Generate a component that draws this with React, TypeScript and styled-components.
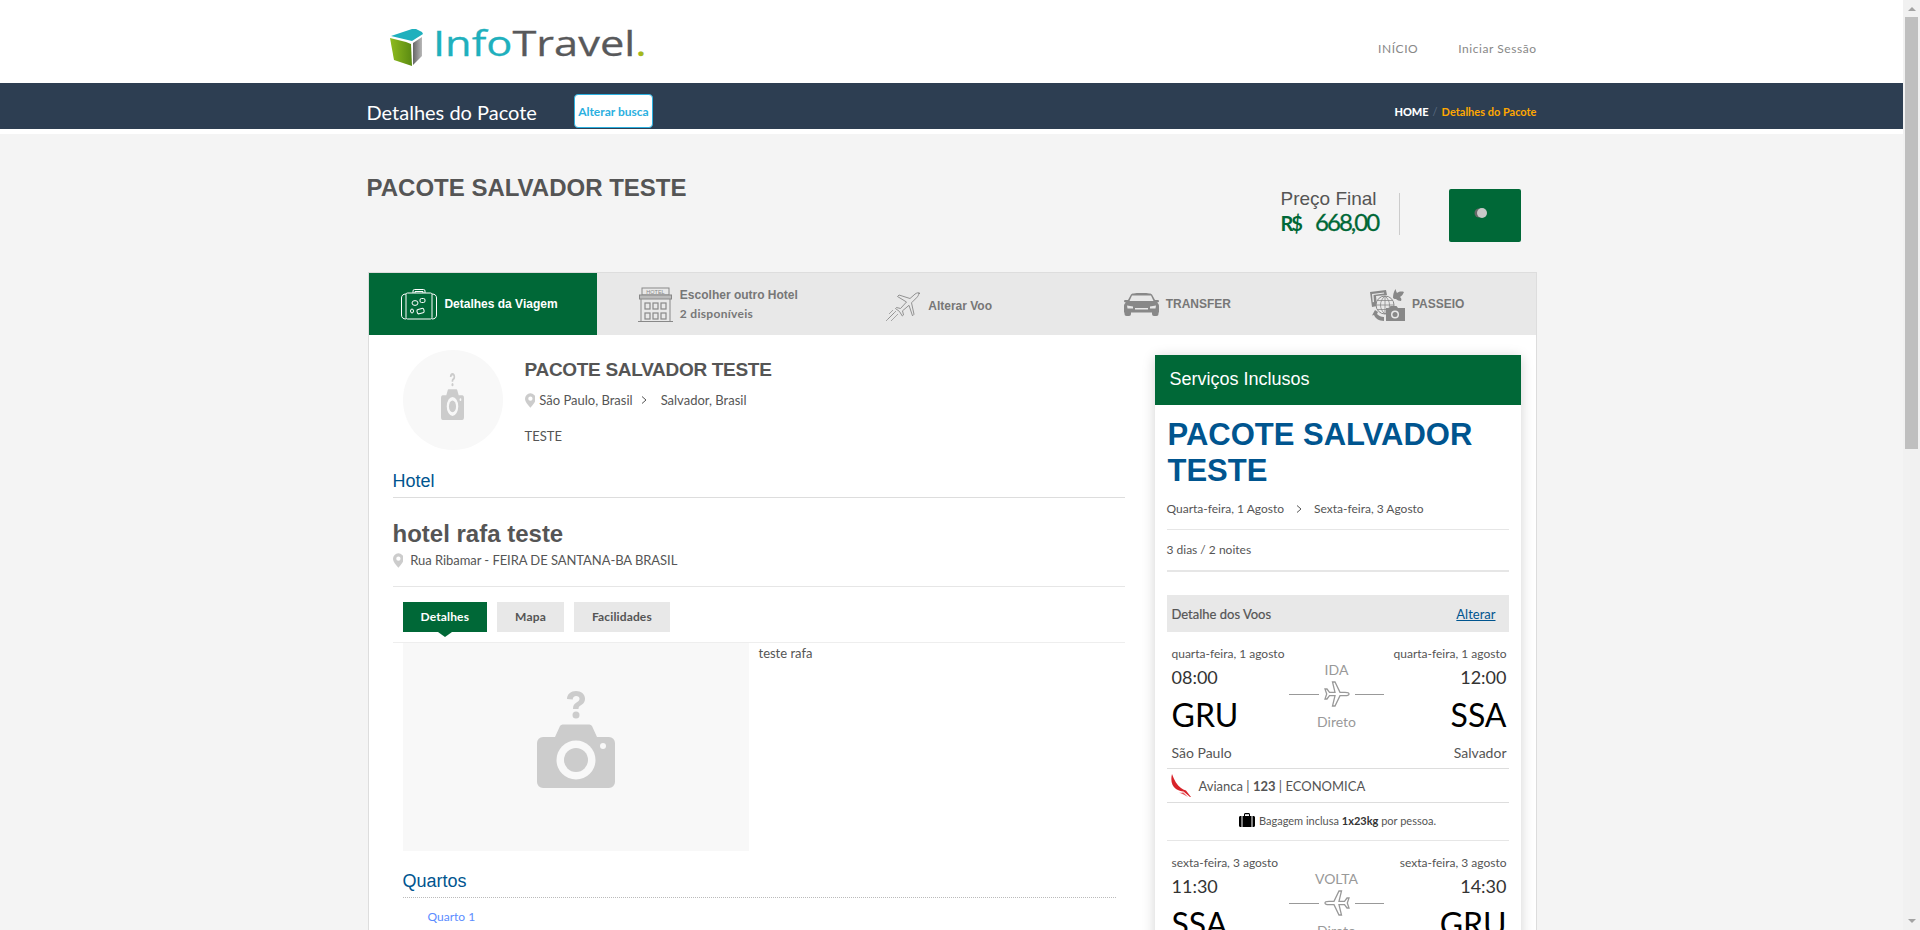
import styled, { createGlobalStyle } from "styled-components";

const GREEN = "#006837";
const BLUE = "#00558f";

const Global = createGlobalStyle`
  body { margin: 0; padding-right: 17px; background: #f4f4f4; font-family: Lato, "Liberation Sans", sans-serif; color: #555; }
`;

/* icons */
const Cube = () => (
  <svg width="33" height="37" viewBox="0 0 33 37">
    <defs>
      <linearGradient id="cg" x1="0" x2="1" y1="0" y2="0">
        <stop offset="0" stopColor="#8fbc1e" />
        <stop offset="1" stopColor="#5a8a12" />
      </linearGradient>
      <linearGradient id="cr" x1="0" x2="1" y1="0" y2="0">
        <stop offset="0" stopColor="#666" />
        <stop offset="1" stopColor="#b8b8b8" />
      </linearGradient>
    </defs>
    <path d="M0 9 L16 13 L21 15 L22 37 L4 31 Z" fill="url(#cg)" />
    <path d="M23 14 L32 8 L32 27 L23 36 Z" fill="url(#cr)" />
    <path d="M1 7 L22 0 L26 0 L32 3 L33 5 L22 12 Z" fill="#1fb0bd" />
  </svg>
);

const Pin = ({ size = 15 }: { size?: number }) => (
  <svg width={size * 0.72} height={size} viewBox="0 0 12 16">
    <path
      d="M6 0a6 6 0 0 0-6 6c0 4 6 10 6 10s6-6 6-10a6 6 0 0 0-6-6zm0 8.400A2.400 2.400 0 1 1 6 3.600a2.400 2.400 0 0 1 0 4.800z"
      fill="#ccc"
    />
  </svg>
);

const Chevron = () => (
  <svg width="6" height="8" viewBox="0 0 6 8">
    <path d="M1 .5 L5 4 L1 7.500" fill="none" stroke="#555" strokeWidth="1" />
  </svg>
);

const Suitcase = () => (
  <svg width="36" height="31" viewBox="0 0 36 31" fill="none" stroke="#fff" strokeWidth="1">
    <path d="M12 4V2a1.500 1.500 0 0 1 1.500-1.500h9A1.500 1.500 0 0 1 24 2v2M14 4V2.500h8V4" />
    <rect x="5" y="4" width="26" height="26" rx="1.500" />
    <path d="M5 5C2 5 .5 6.500.5 9v17c0 2.500 1.500 4 4.500 4M31 5c3 0 4.500 1.500 4.500 4v17c0 2.500-1.500 4-4.500 4" />
    <ellipse cx="14" cy="14" rx="3" ry="2.400" />
    <rect x="19" y="9.500" width="5" height="4" rx="1.500" />
    <rect x="16" y="20" width="7" height="4.500" rx="1.500" transform="rotate(-15 19 22)" />
    <ellipse cx="11" cy="22" rx="1.500" ry="2" />
  </svg>
);

const HotelIcon = () => (
  <svg width="35" height="35" viewBox="0 0 35 35" fill="none" stroke="#888" strokeWidth="1">
    <rect x="4" y="1" width="27" height="7" />
    <text x="17.500" y="6.600" textAnchor="middle" fontSize="5.500" fill="#888" stroke="none" fontFamily="'Liberation Sans', sans-serif">
      HOTEL
    </text>
    <rect x="1.500" y="8" width="32" height="4" fill="#bbb" />
    <path d="M3 12v22M32 12v22M0 34.500h35" />
    {[7, 15, 23].map((x) => (
      <g key={x}>
        <rect x={x} y="16" width="5" height="6" strokeWidth="1.200" />
        <rect x={x} y="26" width="5" height="6" strokeWidth="1.200" />
      </g>
    ))}
  </svg>
);

const PlaneTilt = () => (
  <svg width="36" height="30" viewBox="0 0 36 30" fill="none" stroke="#888" strokeWidth="0.9">
    <path d="M35 1.500c-1-1.400-3.500-.6-5 .6l-5 4.400-11-3.500-1.500 1.500 9 5.500-6 6.500-4-1-1 1 4 3 2.800 4.500 1.200-1-1-4.200 6.500-5.500 3.500 10.500 1.500-1.500-2.500-11.500 5-5c1.300-1.300 2.600-3 2-4.300z" />
    <path d="M11 19 3 27M9 21 1 29M13 22 6 29M8 18 4 22" strokeWidth="0.7" />
  </svg>
);

const Car = () => (
  <svg width="35" height="23" viewBox="0 0 35 23">
    <path
      fill="#888"
      d="M7 1.500C8 .5 10 0 17.500 0S27 .5 28 1.500L31 7h2.500c1 0 1.500.6 1.500 1.200S34.300 9.500 33 9.500c1.300 1 2 2 2 3.500v6.500h-.5V21a2 2 0 0 1-2 2h-2.500a2 2 0 0 1-2-2v-1.500H7V21a2 2 0 0 1-2 2H2.500a2 2 0 0 1-2-2v-1.500H0V13c0-1.500.7-2.500 2-3.500C.7 9.500 0 8.800 0 8.200S.5 7 1.500 7H4z"
    />
    <path fill="#e8e8e8" d="M8 2.500h19L29.500 8h-24zM3 12.500l6 1v2H3.500zM32 12.500l-6 1v2h5.500zM11 15h13v1.500H11z" />
  </svg>
);

const Tour = () => (
  <svg width="35" height="33" viewBox="0 0 35 33" fill="none">
    <path fill="#888" d="M0 4l16-2 1 5-11 1 1 10-5 1z" />
    <path fill="#e8e8e8" d="M2 6l12-1.500.2 1L3.500 7 4 14l-1.300.2z" />
    <circle cx="15" cy="17" r="9" fill="#e8e8e8" stroke="#888" strokeWidth="1" />
    <path d="M6 17h18M15 8v18M15 8c-6 5-6 13 0 18M15 8c6 5 6 13 0 18M7.500 12.500h15M7.500 21.500h15" stroke="#888" strokeWidth="0.8" />
    <path fill="#888" d="M23 10c0-3 .5-6 2.500-9 .6 2 1 3 1.500 4 1-1 4-2 7-1-1 2-2 4-4 5 1 1 2 2 1 4-2 0-4-1-5-2-1 0-2 0-3-1z" />
    <path fill="#888" d="M5 22l3 2-1 2c2 2 4 3 7 3v4c-5 0-9-3-10-6l-2 .5z" />
    <path fill="#888" d="M16 20h3l1.500-2h6L28 20h7v13H16z" />
    <circle cx="25" cy="26.500" r="4" fill="#e8e8e8" />
    <circle cx="25" cy="26.500" r="2.500" fill="#888" />
  </svg>
);

// the avatar uses the same picture stretched, as the reference does
const CameraPlaceholder = ({ width, height }: { width: number; height: number }) => (
  <svg width={width} height={height} viewBox="0 0 78 97" preserveAspectRatio="none">
    <path
      fill="#ccc"
      d="M30 8c0-5 4-8 9-8s9 3 9 7.500c0 4-2 5.500-4.500 7-1.700 1-2 1.800-2 3.500h-5.500c0-3.500 1-5 3.500-6.600 1.500-1 3-1.800 3-3.700 0-1.700-1.500-2.700-3.300-2.700-2 0-3.400 1.300-3.500 3.500z"
    />
    <circle cx="39" cy="24" r="3.500" fill="#ccc" />
    <path
      fill="#ccc"
      d="M6 46h12l5-11a3 3 0 0 1 2.700-1.500h26.600A3 3 0 0 1 55 35l5 11h12a6 6 0 0 1 6 6v39a6 6 0 0 1-6 6H6a6 6 0 0 1-6-6V52a6 6 0 0 1 6-6z"
    />
    <circle cx="39" cy="69" r="19.500" fill="#f8f8f8" />
    <circle cx="39" cy="69" r="12" fill="#ccc" />
    <circle cx="66" cy="55" r="3" fill="#f8f8f8" />
  </svg>
);

const FlightPlane = ({ flip }: { flip?: boolean }) => (
  <PlaneSvg $flip={flip} width="26" height="26" viewBox="0 0 26 26">
    <path
      d="M25 13c0-1-2-1.700-4-1.700h-5L11 1H8.500l2.500 10.300H5.500L3 8H1l1.700 5L1 18h2l2.500-3.300H11L8.500 25H11l5-10.300h5c2 0 4-.7 4-1.700z"
      fill="#fff"
      stroke="#999"
      strokeWidth="1.300"
    />
  </PlaneSvg>
);

const AviancaLogo = () => (
  <svg width="20" height="23" viewBox="0 0 20 23">
    <path fill="#d8232a" d="M1 0C-.5 6 .5 12 5 15c2.500 1.700 5 2.300 7.500 2.500L19 23h1l-5-6.500C13 16 11.500 15 10 14 6 11 3 6 1 0z" />
    <path fill="#e8585e" d="M8 18.500c2 .3 3.500.3 4.500.1l4.500 4.400c-3-2-6-3.500-9-4.500z" />
  </svg>
);

const BagIcon = () => (
  <svg width="16" height="14" viewBox="0 0 16 14">
    <path fill="#000" d="M5 3V1.500C5 .6 5.600 0 6.500 0h3c.9 0 1.500.6 1.500 1.500V3h-1V1.200H6V3zM3.500 3h9v11h-9zM0 4.500C0 3.600.6 3 1.500 3h1v11h-1C.6 14 0 13.400 0 12.500zM13.500 3h1c.9 0 1.500.6 1.500 1.500v8c0 .9-.6 1.500-1.500 1.500h-1z" />
  </svg>
);

const Spinner = () => (
  <svg width="14" height="12" viewBox="0 0 14 12">
    <circle cx="5" cy="6" r="4.500" fill="#666" />
    <circle cx="8" cy="6" r="5" fill="#c8c8c8" />
  </svg>
);

/* data */
const flights = [
  {
    kind: "IDA",
    date: "quarta-feira, 1 agosto",
    dep: "08:00",
    arr: "12:00",
    from: "GRU",
    to: "SSA",
    fromCity: "São Paulo",
    toCity: "Salvador",
  },
  {
    kind: "VOLTA",
    date: "sexta-feira, 3 agosto",
    dep: "11:30",
    arr: "14:30",
    from: "SSA",
    to: "GRU",
    fromCity: "Salvador",
    toCity: "São Paulo",
  },
];

export default function App() {
  return (
    <>
      <Global />
      <TopBar>
        <Container>
          <Logo>
            <Cube />
            <LogoText>
              <LogoPart $color="#1fb0bd">Info</LogoPart>
              <LogoPart $color="#58595b">Travel</LogoPart>
              <LogoPart $color="#a4b81c">.</LogoPart>
            </LogoText>
          </Logo>
          <Nav>
            <a>INÍCIO</a>
            <a>Iniciar Sessão</a>
          </Nav>
        </Container>
      </TopBar>

      <TitleBar>
        <Container>
          <TitleLeft>
            <PageTitle>Detalhes do Pacote</PageTitle>
            <SearchButton>Alterar busca</SearchButton>
          </TitleLeft>
          <Breadcrumb>
            <b>HOME</b>
            <i>/</i>
            <em>Detalhes do Pacote</em>
          </Breadcrumb>
        </Container>
      </TitleBar>

      <Page>
        <Summary>
          <Heading>PACOTE SALVADOR TESTE</Heading>
          <PriceArea>
            <PriceBlock>
              <PriceLabel>Preço Final</PriceLabel>
              <PriceValue>
                <small>R$</small> 668,00
              </PriceValue>
            </PriceBlock>
            <BuyButton>
              <Spinner />
            </BuyButton>
          </PriceArea>
        </Summary>

        <Panel>
          <Tabs>
            <Tab $active $pl={0} $pr={6}>
              <Suitcase />
              <TabText $active>Detalhes da Viagem</TabText>
            </Tab>
            <Tab $pl={8} $pr={0}>
              <HotelIcon />
              <div>
                <TabText>Escolher outro Hotel</TabText>
                <TabSub>2 disponíveis</TabSub>
              </div>
            </Tab>
            <Tab $pl={0} $pr={20} $down>
              <PlaneTilt />
              <TabText>Alterar Voo</TabText>
            </Tab>
            <Tab $pl={0} $pr={12}>
              <Car />
              <TabText>TRANSFER</TabText>
            </Tab>
            <Tab $pl={0} $pr={2}>
              <Tour />
              <TabText>PASSEIO</TabText>
            </Tab>
          </Tabs>

          <Body>
            <Main>
              <PackageRow>
                <Avatar>
                  <CameraPlaceholder width={23} height={47} />
                </Avatar>
                <PackageInfo>
                  <PackageTitle>PACOTE SALVADOR TESTE</PackageTitle>
                  <Route>
                    <Pin />
                    <span>São Paulo, Brasil</span>
                    <Chevron />
                    <span>Salvador, Brasil</span>
                  </Route>
                  <Description>TESTE</Description>
                </PackageInfo>
              </PackageRow>

              <SectionTitle>Hotel</SectionTitle>
              <HotelName>hotel rafa teste</HotelName>
              <Address>
                <Pin />
                <span>Rua Ribamar - FEIRA DE SANTANA-BA BRASIL</span>
              </Address>

              <SubTabs>
                <SubTab $active>Detalhes</SubTab>
                <SubTab>Mapa</SubTab>
                <SubTab>Facilidades</SubTab>
              </SubTabs>
              <TabContent>
                <Photo>
                  <CameraPlaceholder width={78} height={97} />
                </Photo>
                <span>teste rafa</span>
              </TabContent>

              <RoomsTitle>Quartos</RoomsTitle>
              <RoomLink>Quarto 1</RoomLink>
            </Main>

            <Side>
              <SideHeader>Serviços Inclusos</SideHeader>
              <SideBody>
                <SideTitle>PACOTE SALVADOR TESTE</SideTitle>
                <SideDates>
                  <span>Quarta-feira, 1 Agosto</span>
                  <Chevron />
                  <span>Sexta-feira, 3 Agosto</span>
                </SideDates>
                <SideNights>3 dias / 2 noites</SideNights>
                <FlightHead>
                  <strong>Detalhe dos Voos</strong>
                  <a>Alterar</a>
                </FlightHead>
                {flights.map((f) => (
                  <Flight key={f.kind}>
                    <FlightGrid>
                      <FlightCol>
                        <FlightDate>{f.date}</FlightDate>
                        <FlightTime>{f.dep}</FlightTime>
                        <Airport>{f.from}</Airport>
                        <City>{f.fromCity}</City>
                      </FlightCol>
                      <FlightMid>
                        <MidLabel>{f.kind}</MidLabel>
                        <MidRow>
                          <hr />
                          <FlightPlane flip={f.kind === "VOLTA"} />
                          <hr />
                        </MidRow>
                        <MidLabel $low>Direto</MidLabel>
                      </FlightMid>
                      <FlightCol $right>
                        <FlightDate>{f.date}</FlightDate>
                        <FlightTime>{f.arr}</FlightTime>
                        <Airport>{f.to}</Airport>
                        <City>{f.toCity}</City>
                      </FlightCol>
                    </FlightGrid>
                    <Airline>
                      <AviancaLogo />
                      <span>
                        Avianca | <b>123</b> | ECONOMICA
                      </span>
                    </Airline>
                    <Baggage>
                      <BagIcon />
                      <span>
                        Bagagem inclusa <b>1x23kg</b> por pessoa.
                      </span>
                    </Baggage>
                  </Flight>
                ))}
              </SideBody>
            </Side>
          </Body>
        </Panel>
      </Page>

      <Scrollbar>
        <ArrowUp />
        <Thumb />
        <ArrowDown />
      </Scrollbar>
    </>
  );
}

/* styles */
const Container = styled.div`
  width: 1170px;
  margin: 0 auto;
  display: flex;
  justify-content: space-between;
`;

const TopBar = styled.header`
  height: 83px;
  background: #fff;
`;

const Logo = styled.div`
  display: flex;
  align-items: flex-start;
  gap: 10px;
  padding: 29px 0 0 23px;
`;

const LogoText = styled.div`
  display: flex;
  margin-top: -10px;
  font-family: "Open Sans", sans-serif;
  font-size: 35px;
  line-height: 48px;
  white-space: nowrap;
  transform: scaleX(1.24);
  transform-origin: left center;
`;

const LogoPart = styled.span<{ $color: string }>`
  color: ${(p) => p.$color};
  -webkit-text-stroke: 0.3px ${(p) => p.$color};
`;

const Nav = styled.nav`
  display: flex;
  gap: 40px;
  padding-top: 42px;
  font-size: 12px;
  line-height: 14px;
  letter-spacing: 0.55px;
  color: #888;
`;

const TitleBar = styled.div`
  height: 46px;
  background: #2d3e52;
  border-bottom: 5px solid #fff;
`;

const TitleLeft = styled.div`
  display: flex;
  gap: 37px;
  padding-top: 11px;
`;

const PageTitle = styled.h1`
  margin: 0;
  font-size: 20px;
  line-height: 36px;
  font-weight: 400;
  color: #fff;
`;

const SearchButton = styled.button`
  width: 79px;
  height: 34px;
  padding: 0;
  background: #fff;
  border: 1px solid #2bb0e0;
  border-radius: 4px;
  font-family: Lato, sans-serif;
  font-size: 12px;
  font-weight: 700;
  color: #2bb0e0;
`;

const Breadcrumb = styled.div`
  display: flex;
  gap: 4px;
  padding-top: 22px;
  font-size: 11px;
  line-height: 14px;
  font-weight: 700;
  b {
    color: #fff;
  }
  i {
    font-style: normal;
    font-weight: 400;
    color: #5a6b80;
  }
  em {
    font-style: normal;
    color: #ffa800;
  }
`;

const Page = styled.main`
  width: 1170px;
  margin: 0 auto;
  padding-bottom: 60px;
`;

const Summary = styled.section`
  height: 138px;
  padding-top: 40px;
  box-sizing: border-box;
  display: flex;
  justify-content: space-between;
  align-items: flex-start;
`;

const Heading = styled.h2`
  margin: 0;
  font-family: "Liberation Sans", sans-serif;
  font-size: 24px;
  line-height: 27px;
  font-weight: 700;
  color: #555;
`;

const PriceArea = styled.div`
  display: flex;
  align-items: flex-start;
  padding-right: 16px;
  margin-top: 15px;
`;

const PriceBlock = styled.div`
  width: 118px;
  height: 42px;
  margin-top: 4px;
  border-right: 1px solid #ccc;
  margin-right: 49px;
`;

const PriceLabel = styled.div`
  margin-top: -5px;
  font-family: "Liberation Sans", sans-serif;
  font-size: 19px;
  line-height: 22px;
  color: #555;
`;

const PriceValue = styled.div`
  margin-top: -2px;
  font-size: 24px;
  line-height: 28px;
  letter-spacing: -2px;
  color: ${GREEN};
  -webkit-text-stroke: 0.3px ${GREEN};
  small {
    font-size: 20px;
    font-weight: 700;
    margin-right: 10px;
    -webkit-text-stroke: 0;
  }
`;

const BuyButton = styled.button`
  width: 72px;
  height: 53px;
  padding: 0 8px 3px 0;
  background: ${GREEN};
  border: 0;
  border-radius: 2px;
`;

const Panel = styled.section`
  background: #fff;
  border: 1px solid #ddd;
  margin-left: 1px;
`;

const Tabs = styled.div`
  display: grid;
  grid-template-columns: 228px repeat(4, 1fr);
  height: 62px;
  background: #e8e8e8;
`;

const TabText = styled.div<{ $active?: boolean }>`
  font-family: "Liberation Sans", sans-serif;
  font-size: 12px;
  line-height: 16px;
  font-weight: 700;
  color: ${(p) => (p.$active ? "#fff" : "#777")};
`;

const Tab = styled.div<{ $active?: boolean; $pl: number; $pr: number; $down?: boolean }>`
  display: flex;
  align-items: center;
  justify-content: center;
  gap: 7px;
  padding: ${(p) => (p.$down ? "5px" : "0")} ${(p) => p.$pr}px 0 ${(p) => p.$pl}px;
  background: ${(p) => (p.$active ? GREEN : "transparent")};
  > ${TabText} {
    margin-top: -1px;
  }
`;

const TabSub = styled.div`
  margin-top: 4px;
  font-size: 12px;
  line-height: 14px;
  font-weight: 700;
  letter-spacing: 0.3px;
  color: #777;
`;

const Body = styled.div`
  display: flex;
  gap: 30px;
  padding: 15px 15px 0 24px;
  min-height: 1519px;
`;

const Main = styled.div`
  width: 732px;
`;

const PackageRow = styled.div`
  display: flex;
  gap: 22px;
  padding-left: 10px;
  height: 121px;
`;

const Avatar = styled.div`
  width: 100px;
  height: 100px;
  padding-bottom: 7px;
  box-sizing: border-box;
  border-radius: 50%;
  background: #f8f8f8;
  display: flex;
  align-items: center;
  justify-content: center;
`;

const PackageInfo = styled.div`
  padding-top: 9px;
`;

const PackageTitle = styled.h3`
  margin: 0;
  font-family: "Liberation Sans", sans-serif;
  font-size: 19px;
  line-height: 22px;
  letter-spacing: -0.3px;
  font-weight: 700;
  color: #555;
`;

const Route = styled.div`
  display: flex;
  align-items: center;
  gap: 4px;
  margin-top: 10px;
  font-size: 13px;
  line-height: 18px;
  svg + span + svg {
    margin: 0 10px 0 4px;
  }
`;

const Description = styled.p`
  margin: 18px 0 0;
  font-size: 13px;
  line-height: 18px;
`;

const SectionTitle = styled.h4`
  margin: 0;
  padding-bottom: 6px;
  border-bottom: 1px solid #ddd;
  font-family: "Liberation Sans", sans-serif;
  font-size: 18px;
  line-height: 20px;
  font-weight: 400;
  color: ${BLUE};
`;

const HotelName = styled.h3`
  margin: 21px 0 0;
  font-family: "Liberation Sans", sans-serif;
  font-size: 24px;
  line-height: 30px;
  font-weight: 700;
  color: #555;
`;

const Address = styled.div`
  display: flex;
  align-items: center;
  gap: 7px;
  margin-top: 2px;
  padding-bottom: 17px;
  border-bottom: 1px solid #e6e6e6;
  font-size: 13px;
  line-height: 18px;
  letter-spacing: -0.06px;
`;

const SubTabs = styled.div`
  display: flex;
  gap: 10px;
  padding: 15px 0 10px 10px;
  border-bottom: 1px solid #eee;
`;

const SubTab = styled.div<{ $active?: boolean }>`
  position: relative;
  padding: 0 18px;
  line-height: 30px;
  font-size: 12px;
  font-weight: 700;
  letter-spacing: 0.15px;
  color: ${(p) => (p.$active ? "#fff" : "#555")};
  background: ${(p) => (p.$active ? GREEN : "#e8e8e8")};
  &::after {
    content: "";
    display: ${(p) => (p.$active ? "block" : "none")};
    position: absolute;
    left: 50%;
    top: 100%;
    margin-left: -7px;
    border: 7px solid transparent;
    border-top: 5px solid ${GREEN};
    border-bottom: 0;
  }
`;

const TabContent = styled.div`
  display: flex;
  gap: 10px;
  padding-left: 10px;
  font-size: 13px;
  line-height: 20px;
`;

const Photo = styled.div`
  width: 346px;
  height: 208px;
  padding-bottom: 16px;
  box-sizing: border-box;
  background: #f8f8f8;
  display: flex;
  align-items: center;
  justify-content: center;
`;

const RoomsTitle = styled(SectionTitle)`
  margin: 20px 9px 0 10px;
  padding-bottom: 6px;
  border-bottom: 1px dotted #bbb;
`;

const RoomLink = styled.a`
  display: block;
  margin: 11px 0 0 35px;
  font-size: 12px;
  line-height: 16px;
  color: #5b8cff;
`;

const Side = styled.aside`
  width: 366px;
  margin-top: 5px;
  align-self: flex-start;
  background: #fff;
  box-shadow: 0 2px 12px rgba(0, 0, 0, 0.18);
`;

const SideHeader = styled.div`
  height: 50px;
  padding-left: 15px;
  background: ${GREEN};
  font-family: "Liberation Sans", sans-serif;
  font-size: 18px;
  line-height: 49px;
  color: #fff;
`;

const SideBody = styled.div`
  padding: 12px 12px 20px;
`;

const SideTitle = styled.h2`
  margin: 0;
  padding-left: 1px;
  font-family: "Liberation Sans", sans-serif;
  font-size: 31px;
  line-height: 36px;
  font-weight: 700;
  color: ${BLUE};
`;

const SideDates = styled.div`
  display: flex;
  align-items: center;
  gap: 12px;
  padding: 12px 0;
  border-bottom: 1px solid #e6e6e6;
  font-size: 12px;
  line-height: 16px;
`;

const SideNights = styled.div`
  padding: 12px 0;
  border-bottom: 2px solid #e6e6e6;
  font-size: 12px;
  line-height: 16px;
`;

const FlightHead = styled.div`
  display: flex;
  justify-content: space-between;
  align-items: center;
  height: 37px;
  margin-top: 23px;
  padding: 0 13px 0 5px;
  background: #e8e8e8;
  font-size: 13px;
  strong {
    font-weight: 400;
    -webkit-text-stroke: 0.2px #555;
  }
  a {
    color: ${BLUE};
    text-decoration: underline;
  }
`;

const Flight = styled.div`
  padding-top: 14px;
`;

const FlightGrid = styled.div`
  display: flex;
  justify-content: space-between;
  padding: 0 2px 0 5px;
`;

const FlightCol = styled.div<{ $right?: boolean }>`
  width: 118px;
  white-space: nowrap;
  display: flex;
  flex-direction: column;
  align-items: ${(p) => (p.$right ? "flex-end" : "flex-start")};
`;

const FlightDate = styled.div`
  font-size: 12px;
  line-height: 16px;
`;

const FlightTime = styled.div`
  margin-top: 4px;
  font-size: 18px;
  line-height: 22px;
  color: #333;
`;

const Airport = styled.div`
  margin-top: 7px;
  font-size: 32px;
  line-height: 40px;
  color: #000;
`;

const City = styled.div`
  margin-top: 9px;
  font-size: 14px;
  line-height: 18px;
`;

const FlightMid = styled.div`
  padding-top: 15px;
  margin-right: 5px;
  display: flex;
  flex-direction: column;
  align-items: center;
`;

const MidLabel = styled.div<{ $low?: boolean }>`
  margin-top: ${(p) => (p.$low ? "4px" : "0")};
  font-size: 14px;
  line-height: 18px;
  color: #999;
`;

const MidRow = styled.div`
  display: flex;
  align-items: center;
  gap: 5px;
  height: 30px;
  width: 95px;
  hr {
    flex: 1;
    margin: 0;
    border: 0;
    border-top: 1px solid #999;
  }
`;

const PlaneSvg = styled.svg<{ $flip?: boolean }>`
  transform: ${(p) => (p.$flip ? "scaleX(-1)" : "none")};
`;

const Airline = styled.div`
  display: flex;
  align-items: center;
  gap: 8px;
  height: 33px;
  margin-top: 6px;
  padding-left: 4px;
  border-top: 1px solid #ddd;
  border-bottom: 1px solid #ddd;
  font-size: 13px;
`;

const Baggage = styled.div`
  display: flex;
  align-items: center;
  justify-content: center;
  gap: 4px;
  height: 38px;
  padding-bottom: 3px;
  box-sizing: border-box;
  border-bottom: 1px solid #e6e6e6;
  font-size: 11px;
  color: #555;
  b {
    color: #333;
  }
`;

/* the browser's own scrollbar does not show in the capture */
const Scrollbar = styled.div`
  position: fixed;
  top: 0;
  right: 0;
  bottom: 0;
  width: 17px;
  background: #f1f1f1;
  display: flex;
  flex-direction: column;
  align-items: center;
  justify-content: space-between;
`;

const ArrowUp = styled.div`
  position: absolute;
  top: 7px;
  border: 4px solid transparent;
  border-top: 0;
  border-bottom: 4px solid #a3a3a3;
`;

const ArrowDown = styled.div`
  position: absolute;
  bottom: 7px;
  border: 4px solid transparent;
  border-bottom: 0;
  border-top: 4px solid #a3a3a3;
`;

const Thumb = styled.div`
  margin-top: 17px;
  width: 13px;
  height: 432px;
  background: #bfbfbf;
`;
